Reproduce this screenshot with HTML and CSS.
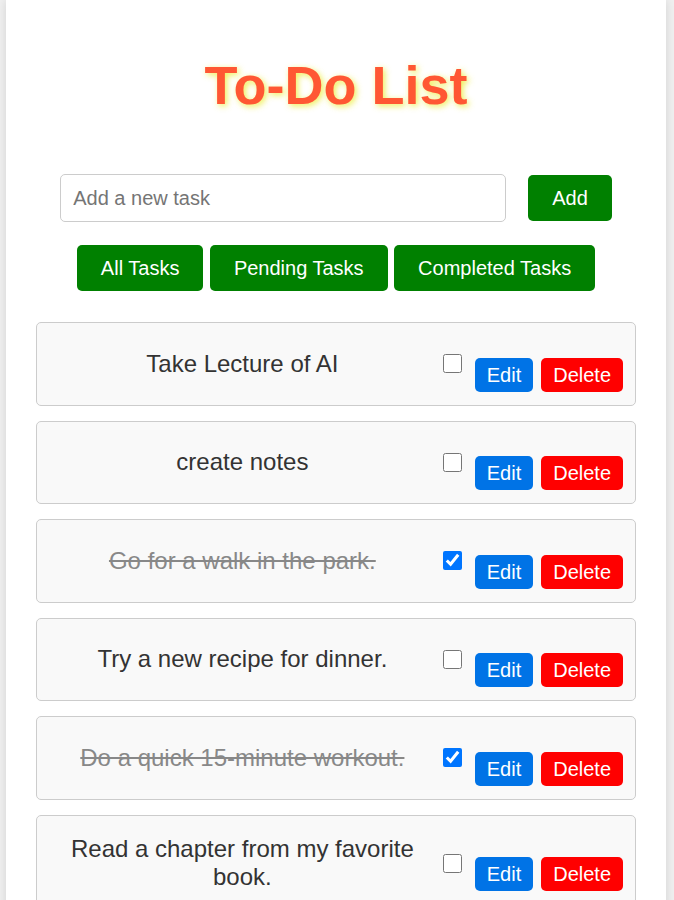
FILE: index.html
```html
<!DOCTYPE html>
<html lang="en">
<head>
<meta charset="utf-8">
<title>To-Do List</title>
<link rel="stylesheet" href="styles.css">
</head>
<body>
<div class="container">
  <h1 class="title">To-Do List</h1>
  <div class="add-row">
    <input class="task-input" type="text" placeholder="Add a new task">
    <button class="btn btn-green">Add</button>
  </div>
  <div class="filters">
    <button class="btn btn-green">All Tasks</button>
    <button class="btn btn-green">Pending Tasks</button>
    <button class="btn btn-green">Completed Tasks</button>
  </div>
  <ul class="task-list">
    <li class="task">
      <span class="task-text">Take Lecture of AI</span>
      <input class="task-check" type="checkbox">
      <button class="sm-btn edit">Edit</button>
      <button class="sm-btn delete">Delete</button>
    </li>
    <li class="task">
      <span class="task-text">create notes</span>
      <input class="task-check" type="checkbox">
      <button class="sm-btn edit">Edit</button>
      <button class="sm-btn delete">Delete</button>
    </li>
    <li class="task">
      <span class="task-text done">Go for a walk in the park.</span>
      <input class="task-check" type="checkbox" checked>
      <button class="sm-btn edit">Edit</button>
      <button class="sm-btn delete">Delete</button>
    </li>
    <li class="task">
      <span class="task-text">Try a new recipe for dinner.</span>
      <input class="task-check" type="checkbox">
      <button class="sm-btn edit">Edit</button>
      <button class="sm-btn delete">Delete</button>
    </li>
    <li class="task">
      <span class="task-text done">Do a quick 15-minute workout.</span>
      <input class="task-check" type="checkbox" checked>
      <button class="sm-btn edit">Edit</button>
      <button class="sm-btn delete">Delete</button>
    </li>
    <li class="task">
      <span class="task-text">Read a chapter from my favorite book.</span>
      <input class="task-check" type="checkbox">
      <button class="sm-btn edit">Edit</button>
      <button class="sm-btn delete">Delete</button>
    </li>
  </ul>
</div>
</body>
</html>
```

FILE: styles.css
```css
html, body {
  margin: 0;
  padding: 0;
}
body {
  background: #f0f0f0;
  font-family: "Liberation Sans", Arial, sans-serif;
}
.container {
  width: 660px;
  margin: 0 8px 0 6px;
  background: #fff;
  box-shadow: 0 0 10px rgba(0, 0, 0, 0.12);
  padding: 1px 30px 40px;
  box-sizing: border-box;
  min-height: 1200px;
}
.title {
  margin: 53px 0 58px;
  text-align: center;
  font-size: 54px;
  font-weight: bold;
  color: #ff5733;
  text-shadow: 2px 2px 6px rgba(235, 235, 40, 0.8);
}
.add-row {
  display: flex;
  justify-content: center;
  align-items: center;
  gap: 22px;
}
.task-input {
  width: 446px;
  height: 48px;
  box-sizing: border-box;
  padding: 0 12px;
  border: 1px solid #ccc;
  border-radius: 5px;
  font-family: "Liberation Sans", Arial, sans-serif;
  font-size: 20px;
  color: #333;
}
.task-input::placeholder {
  color: #757575;
}
.btn {
  border: none;
  border-radius: 5px;
  padding: 12px 24px;
  font-family: "Liberation Sans", Arial, sans-serif;
  font-size: 20px;
  line-height: 22px;
  color: #fff;
  cursor: pointer;
}
.btn-green {
  background: #008000;
}
.filters {
  display: flex;
  justify-content: center;
  gap: 6.5px;
  margin-top: 23px;
}
.task-list {
  list-style: none;
  margin: 31px 0 0;
  padding: 0;
}
.task {
  display: flex;
  align-items: center;
  background: #f9f9f9;
  border: 1px solid #ccc;
  border-radius: 5px;
  padding: 12.75px 12px;
  margin-bottom: 15px;
}
.task-text {
  flex: 1;
  text-align: center;
  font-size: 24px;
  color: #333;
  line-height: 28px;
  padding: 7px 0;
}
.task-text.done {
  color: #888;
  text-decoration: line-through;
}
.task-check {
  width: 19px;
  height: 19px;
  margin: 0 0 0 7px;
}
.sm-btn {
  border: none;
  border-radius: 5px;
  padding: 6px 12px;
  margin-top: 22px;
  font-family: "Liberation Sans", Arial, sans-serif;
  font-size: 20px;
  line-height: 22px;
  color: #fff;
  cursor: pointer;
}
.edit {
  background: #0073e6;
  margin-left: 13px;
}
.delete {
  background: #ff0000;
  margin-left: 8px;
}
```
